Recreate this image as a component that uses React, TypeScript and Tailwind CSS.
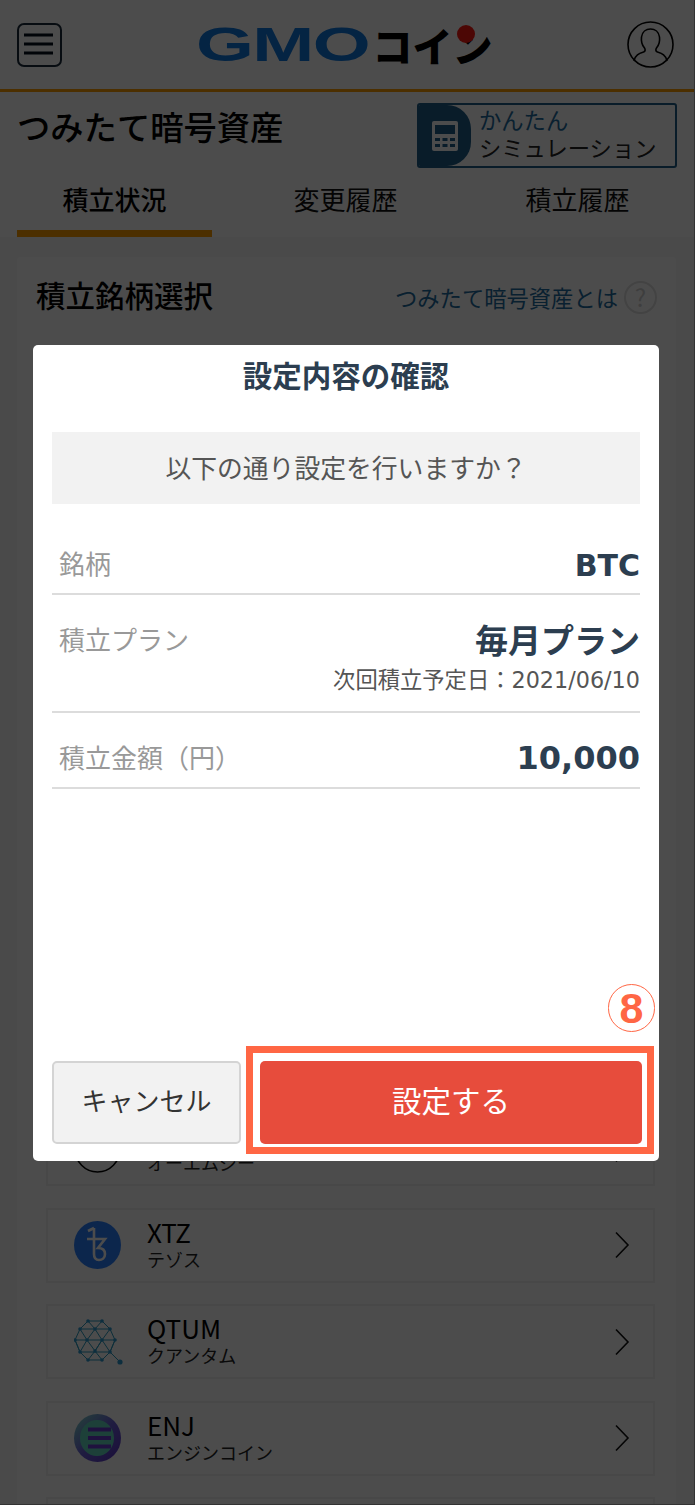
const jp = "font-['Noto_Sans_CJK_JP','Noto_Sans',sans-serif]"
const latinJp = "font-['DejaVu_Sans','Noto_Sans_CJK_JP',sans-serif]"

const coins = [
  { code: 'OMG', name: 'オーエムジー' },
  { code: 'XTZ', name: 'テゾス' },
  { code: 'QTUM', name: 'クアンタム' },
  { code: 'ENJ', name: 'エンジンコイン' },
]

function MenuIcon() {
  return (
    <svg width="45" height="44" viewBox="0 0 45 44" fill="none" className="shrink-0">
      <rect x="1" y="1" width="43" height="42" rx="6" stroke="#1a2a3a" strokeWidth="2" />
      <path d="M7 12h29M7 21h29M7 30h29" stroke="#05101c" strokeWidth="3" />
    </svg>
  )
}

function UserIcon() {
  return (
    <svg width="47" height="47" viewBox="0 0 47 47" fill="none" className="shrink-0">
      <circle cx="23.5" cy="23.5" r="22.5" stroke="#000" strokeWidth="1.6" />
      <path
        d="M7 40c1-6 5-7.500 9.500-9 2-.8 2-2.500 1-4-2.500-3-3.500-7-3-11 .7-5 4.500-8 9-8s8.300 3 9 8c.5 4-.5 8-3 11-1 1.500-1 3.200 1 4 4.500 1.500 8.500 3 9.500 9"
        stroke="#000"
        strokeWidth="1.6"
      />
    </svg>
  )
}

function Logo() {
  return (
    <div className="relative flex h-[40px] w-[298px] items-center overflow-visible whitespace-nowrap">
      <span className="w-[177px] shrink-0 origin-left scale-x-[1.55] font-['Liberation_Sans',sans-serif] text-[48px] font-bold leading-none tracking-[-1px] text-[#0f78e0]">
        GMO
      </span>
      <span className={`${jp} text-[40px] font-black leading-none text-black`}>コイン</span>
      <span className="absolute left-[261px] top-[0px] h-[18px] w-[18px] rounded-full bg-[#ff1a12]" />
    </div>
  )
}

function CalcIcon() {
  return (
    <svg width="26" height="30" viewBox="0 0 26 30" className="shrink-0">
      <rect width="26" height="30" rx="2" fill="#fff" />
      <rect x="3" y="4" width="20" height="9" fill="#1f5f8b" />
      <path d="M3 17h5v3H3zM10.500 17h5v3h-5zM18 17h5v3h-5zM3 23h5v3H3zM10.500 23h5v3h-5zM18 23h5v3h-5z" fill="#1f5f8b" />
    </svg>
  )
}

function CoinIcon({ code }: { code: string }) {
  if (code === 'XTZ') {
    return (
      <svg width="47" height="48" viewBox="0 0 47 48" fill="none">
        <ellipse cx="23.500" cy="24" rx="23.500" ry="24" fill="#2a80ff" />
        <path
          d="M20 7v26c0 4 2 6 5 6s6-2 6-6-3-6-7-6l7-9H13M20 7l-6 3"
          stroke="#fff"
          strokeWidth="2.600"
        />
      </svg>
    )
  }
  if (code === 'QTUM') {
    const pts = [
      [14, 3], [28, 3], [6, 11], [21, 11], [36, 11], [1, 22], [13, 22], [28, 22], [41, 22],
      [6, 34], [21, 33], [36, 34], [14, 42], [28, 42],
    ]
    return (
      <svg width="50" height="48" viewBox="0 0 50 48" fill="none">
        <path
          d="M14 3h14l8 8 5 11-5 12-8 8H14l-8-8-5-12 5-11zM14 3l7 8 7-8M6 11h30M6 11l7 11 8-11 7 11 8-11M1 22h40M1 22l5 12M13 22l8 11 7-11 8 12M13 22L6 34M28 22l-7 11M41 22l-5 12M6 34h30M6 34l8 8 7-9 7 9 8-8M36 34l10 10"
          stroke="#2a9bc0"
          strokeWidth="1"
        />
        {pts.map(([x, y]) => (
          <circle key={`${x}-${y}`} cx={x} cy={y} r="1.800" fill="#2e9ad0" />
        ))}
        <circle cx="46" cy="44" r="2.600" fill="#2e9ad0" />
      </svg>
    )
  }
  if (code === 'ENJ') {
    return (
      <svg width="47" height="48" viewBox="0 0 47 48" fill="none">
        <defs>
          <linearGradient id="enj" x1="0" y1="0" x2="1" y2="1">
            <stop offset="0" stopColor="#7de0c4" />
            <stop offset="0.5" stopColor="#6a5fd8" />
            <stop offset="1" stopColor="#5a2fc0" />
          </linearGradient>
        </defs>
        <ellipse cx="23.500" cy="24" rx="23.500" ry="24" fill="url(#enj)" />
        <ellipse cx="23" cy="24" rx="17" ry="18" fill="#62d8c0" />
        <path d="M14 15.500h23M14 24h23M14 32.500h23" stroke="#6a3bd0" strokeWidth="4" />
      </svg>
    )
  }
  return (
    <svg width="47" height="48" viewBox="0 0 47 48" fill="none">
      <ellipse cx="23.500" cy="24" rx="22.500" ry="23" stroke="#000" strokeWidth="1.600" />
    </svg>
  )
}

function CoinRow({ code, name }: { code: string; name: string }) {
  return (
    <div className="flex h-[75px] items-center border-2 border-[#f1f1f1] pl-[26px] pr-[23px]">
      <div className="flex h-[48px] w-[50px] shrink-0 items-center">
        <CoinIcon code={code} />
      </div>
      <div className="ml-[23px] flex-1 self-start pt-[8px]">
        <p className={`${jp} text-[26px] leading-[28px] text-black`}>{code}</p>
        <p className={`${jp} mt-[2px] text-[18px] leading-[22px] text-[#222]`}>{name}</p>
      </div>
      <svg width="16" height="28" viewBox="0 0 16 28" fill="none">
        <path d="M2 1.500L14 14 2 26.500" stroke="#111" strokeWidth="1.600" />
      </svg>
    </div>
  )
}

function Background() {
  return (
    <div className={`${jp} h-full bg-[#f8f8f8]`}>
      <header className="flex h-[92px] items-center justify-between border-b-[3px] border-[#ff9f00] bg-white pl-[17px] pr-[21px]">
        <MenuIcon />
        <Logo />
        <UserIcon />
      </header>

      <div className="bg-white">
        <div className="flex h-[80px] items-start justify-between pl-[17px] pr-[18px] pt-[11px]">
          <h1 className="text-[33.300px] font-medium leading-[46px] text-black">つみたて暗号資産</h1>
          <div className="flex h-[65px] w-[260px] overflow-hidden rounded-[3px] border-2 border-[#1f5f8b]">
            <div className="flex w-[52px] items-center justify-center rounded-r-[24px] bg-[#1f5f8b]">
              <CalcIcon />
            </div>
            <div className="pl-[8px] text-[22.300px] leading-[28px]">
              <p className="text-[#1f6da0]">かんたん</p>
              <p className="text-[#222]">シミュレーション</p>
            </div>
          </div>
        </div>
        <nav className="flex h-[65px] items-start px-[17px] pt-[8px] text-center text-[26px] leading-[38px]">
          <div className="relative h-[57px] w-[195px] font-medium text-black">
            積立状況
            <span className="absolute inset-x-0 bottom-0 h-[7px] bg-[#ff9f00]" />
          </div>
          <div className="ml-[36px] w-[195px] text-[#111]">変更履歴</div>
          <div className="ml-[37px] w-[195px] text-[#111]">積立履歴</div>
        </nav>
      </div>

      <section className="ml-[17px] mr-[19px] mt-[20px] rounded-[4px] bg-white pl-[29px] pr-[21px] pt-[17px]">
        <div className="flex items-center justify-between">
          <h2 className="-ml-[10px] text-[29.500px] font-medium leading-[40px] text-black">積立銘柄選択</h2>
          <div className="-mr-[2px] mt-[6px] flex items-center gap-[6px]">
            <span className="text-[22.300px] leading-[32px] text-[#1f6da0]">つみたて暗号資産とは</span>
            <span className="flex h-[33px] w-[33px] items-center justify-center rounded-full border-2 border-[#e0e0e0] text-[24px] leading-none text-[#d0d0d0]">
              ?
            </span>
          </div>
        </div>
        <div className="mt-[797px] flex flex-col gap-[21.500px]">
          {coins.map((c) => (
            <CoinRow key={c.code} code={c.code} name={c.name} />
          ))}
          <div className="h-[75px] border-2 border-[#f1f1f1]" />
        </div>
      </section>
    </div>
  )
}

function InfoRow({
  label,
  value,
  valueClass,
  note,
  h,
}: {
  label: string
  value: string
  valueClass: string
  note?: string
  h: string
}) {
  return (
    <div className={`flex justify-between border-b-2 border-[#dcdcdc] pl-[7px] ${h}`}>
      <span className="pt-[2px] text-[26px] leading-[36px] text-[#999]">{label}</span>
      <div className="-mt-[2px] text-right">
        <p className={`font-bold leading-[44px] text-[#2c3e50] ${valueClass}`}>{value}</p>
        {note && <p className={`${latinJp} mt-[3px] text-[22.300px] leading-[32px] text-[#555]`}>{note}</p>}
      </div>
    </div>
  )
}

export default function App() {
  return (
    <div className="relative h-[1505px] w-[695px] overflow-hidden">
      <Background />
      <div className="absolute inset-0 border-b border-r border-[#333] bg-black/70" />

      <div className={`${jp} absolute left-[33px] top-[345px] flex h-[816px] w-[626px] flex-col rounded-[5px] bg-white px-[19px]`}>
        <h2 className="pt-[8px] text-center text-[29.500px] font-bold leading-[42px] text-[#2c3e50]">設定内容の確認</h2>
        <p className="mt-[37px] flex h-[72px] items-center justify-center bg-[#f2f2f2] pb-[2px] text-[25.800px] text-[#555]">
          以下の通り設定を行いますか？
        </p>
        <div className="mt-[39px] flex flex-col">
          <InfoRow label="銘柄" value="BTC" valueClass={`${latinJp} pt-[3px] text-[30px]`} h="h-[52px]" />
          <InfoRow
            label="積立プラン"
            value="毎月プラン"
            valueClass={`${jp} text-[33px]`}
            note="次回積立予定日：2021/06/10"
            h="mt-[24px] h-[94px]"
          />
          <InfoRow label="積立金額（円）" value="10,000" valueClass={`${latinJp} pt-[1px] text-[32px]`} h="mt-[24px] h-[52px]" />
        </div>
        <div className="mb-[17px] mt-auto flex gap-[19px]">
          <button className="h-[83px] w-[189px] shrink-0 rounded-[5px] border-2 border-[#d4d4d4] bg-[#f2f2f2] pb-[6px] text-[26px] text-[#333]">
            キャンセル
          </button>
          <button className="h-[83px] w-[382px] shrink-0 rounded-[5px] bg-[#e74c3c] pb-[6px] text-[29.500px] text-white">
            設定する
          </button>
        </div>

        {/* step annotation over the button */}
        <div className="absolute left-[213px] top-[701px] h-[108px] w-[408px] border-[7px] border-[#ff6644]" />
        <div className="absolute left-[575px] top-[639px] flex h-[48px] w-[47px] items-center justify-center rounded-full border-[1.5px] border-[#ff6644] font-['Liberation_Sans',sans-serif] text-[43px] font-bold leading-none text-[#ff6644]">
          8
        </div>
      </div>
    </div>
  )
}
